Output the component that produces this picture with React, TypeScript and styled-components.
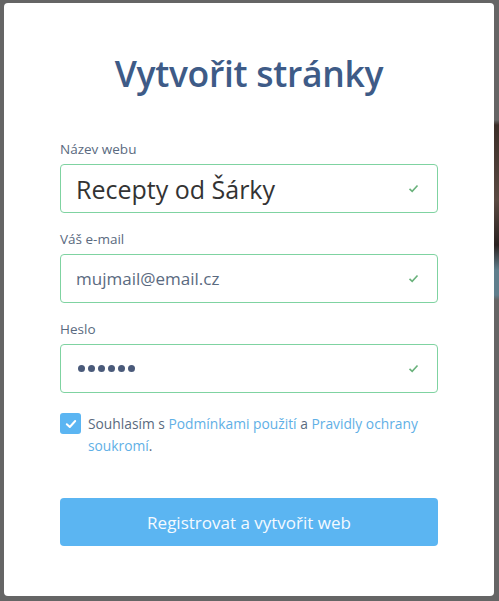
import styled, { createGlobalStyle } from "styled-components";

const GlobalStyle = createGlobalStyle`
  html, body {
    margin: 0;
    padding: 0;
    background: #656565;
  }
  * {
    box-sizing: border-box;
  }
`;

const textColor = "#5a6a80";
const fieldBorder = "#7fd3a1";
const linkColor = "#5fb0e6";
const primaryBlue = "#5bb5f2";
const uiFont = `"Open Sans", "Liberation Sans", sans-serif`;

const Backdrop = styled.div`
  width: 499px;
  height: 601px;
  padding: 3px 5px 5px 4px;
  background-color: #656565;
  background-image: linear-gradient(
    to bottom,
    transparent 120px,
    #3b2e28 125px,
    #5a4a42 200px,
    #2a2220 245px,
    #5f7e8c 270px,
    #5f7e8c 295px,
    transparent 300px
  );
  background-size: 5px 100%;
  background-position: right top;
  background-repeat: no-repeat;
`;

const Modal = styled.div`
  height: 100%;
  background: #ffffff;
  border-radius: 4px;
  padding: 45px 56px 0 56px;
  display: flex;
  flex-direction: column;
`;

const Title = styled.h1`
  margin: 0 0 42px;
  text-align: center;
  font-family: ${uiFont};
  font-weight: 600;
  font-size: 35.5px;
  line-height: 50px;
  letter-spacing: -0.3px;
  color: #3e5b87;
`;

const Form = styled.form`
  display: flex;
  flex-direction: column;
  gap: 17px;
`;

const Field = styled.div`
  display: flex;
  flex-direction: column;
  gap: 6px;
`;

const Label = styled.label`
  font-family: ${uiFont};
  font-size: 13.5px;
  line-height: 18px;
  color: ${textColor};
`;

const InputBox = styled.div`
  height: 49px;
  border: 1px solid ${fieldBorder};
  border-radius: 4px;
  display: flex;
  align-items: center;
  padding: 0 18px 0 15px;
  gap: 12px;
`;

const Value = styled.span<{ large?: boolean }>`
  flex: 1;
  font-family: ${uiFont};
  font-size: ${({ large }) => (large ? "25px" : "17px")};
  color: ${({ large }) => (large ? "#333333" : textColor)};
  white-space: nowrap;
`;

const Dots = styled.span`
  flex: 1;
  display: flex;
  gap: 3px;
  padding-left: 2px;
`;

const Dot = styled.span`
  width: 7px;
  height: 7px;
  border-radius: 50%;
  background: #4a5a7a;
`;

const Agreement = styled.div`
  display: flex;
  align-items: flex-start;
  gap: 7px;
  margin-top: 3px;
`;

const CheckBox = styled.span`
  flex: none;
  width: 21px;
  height: 21px;
  border-radius: 3px;
  background: ${primaryBlue};
  display: flex;
  align-items: center;
  justify-content: center;
`;

const AgreementText = styled.div`
  font-family: ${uiFont};
  font-size: 13.8px;
  line-height: 22px;
  color: ${textColor};
`;

const Line = styled.div`
  white-space: nowrap;
`;

const Link = styled.a`
  color: ${linkColor};
  text-decoration: none;
`;

const SubmitButton = styled.button`
  margin-top: 41px;
  height: 48px;
  border: none;
  border-radius: 4px;
  background: ${primaryBlue};
  color: #f4faff;
  font-family: ${uiFont};
  font-size: 17px;
`;

const FieldCheck = () => (
  <svg width="11" height="9" viewBox="0 0 11 9">
    <path d="M1.5 4.8 L4.2 7.3 L9.5 1.5" fill="none" stroke="#6ab27c" strokeWidth="1.6" />
  </svg>
);

const BoxCheck = () => (
  <svg width="12" height="10" viewBox="0 0 12 10">
    <path d="M1.8 5.2 L4.8 8 L10.2 2" fill="none" stroke="#ffffff" strokeWidth="2" strokeLinecap="round" strokeLinejoin="round" />
  </svg>
);

export default function App() {
  return (
    <>
      <GlobalStyle />
      <Backdrop>
        <Modal>
          <Title>Vytvořit stránky</Title>
          <Form>
            <Field>
              <Label>Název webu</Label>
              <InputBox>
                <Value large>Recepty od Šárky</Value>
                <FieldCheck />
              </InputBox>
            </Field>
            <Field>
              <Label>Váš e-mail</Label>
              <InputBox>
                <Value>mujmail@email.cz</Value>
                <FieldCheck />
              </InputBox>
            </Field>
            <Field>
              <Label>Heslo</Label>
              <InputBox>
                <Dots>
                  {Array.from({ length: 6 }).map((_, i) => (
                    <Dot key={i} />
                  ))}
                </Dots>
                <FieldCheck />
              </InputBox>
            </Field>
            <Agreement>
              <CheckBox>
                <BoxCheck />
              </CheckBox>
              <AgreementText>
                <Line>
                  Souhlasím s <Link>Podmínkami použití</Link> a{" "}
                  <Link>Pravidly ochrany</Link>
                </Line>
                <Line>
                  <Link>soukromí</Link>.
                </Line>
              </AgreementText>
            </Agreement>
          </Form>
          <SubmitButton type="button">Registrovat a vytvořit web</SubmitButton>
        </Modal>
      </Backdrop>
    </>
  );
}
